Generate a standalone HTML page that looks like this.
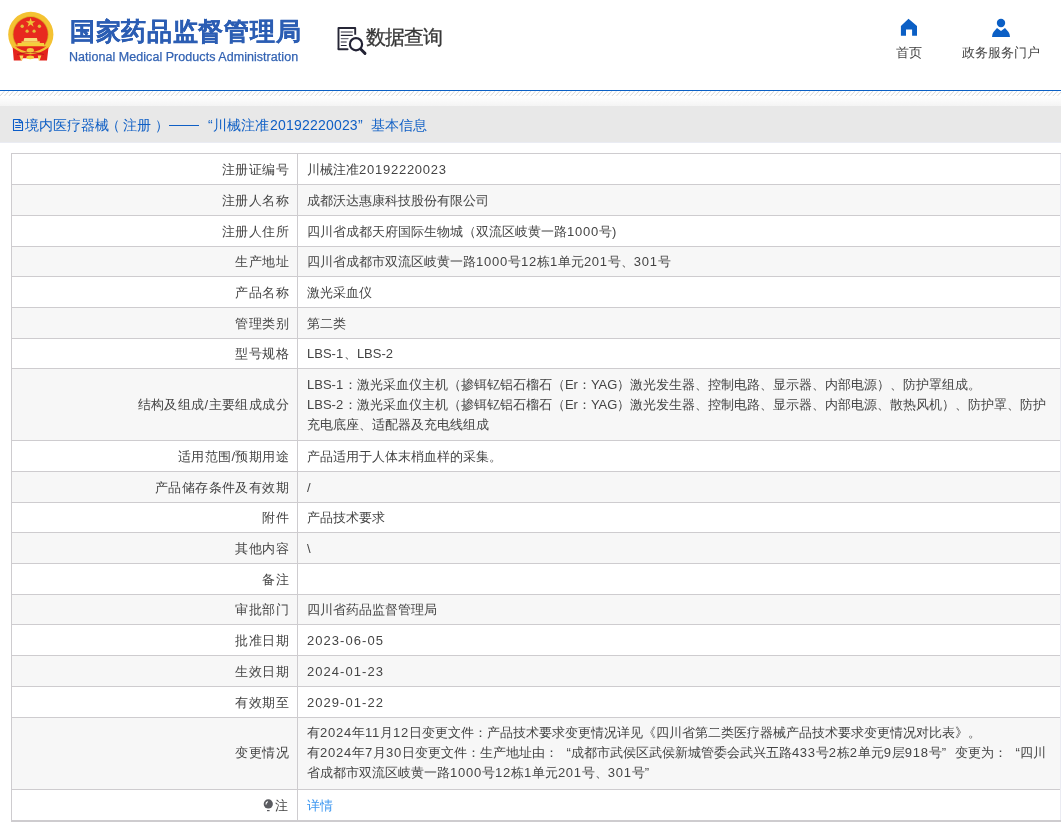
<!DOCTYPE html>
<html><head><meta charset="utf-8">
<style>
*{margin:0;padding:0;box-sizing:border-box}
html,body{width:1061px;height:826px;overflow:hidden;background:#fff;font-family:"Liberation Sans",sans-serif;color:#555}
i,b,q{font-style:normal;font-weight:normal;quotes:none}
q::before,q::after{content:none}
.abs{position:absolute}
#tbl,.abs{will-change:transform}
#title{left:70px;top:15.5px;font-size:24.5px;letter-spacing:0.7px;-webkit-text-stroke:0.25px #2b5db3;font-weight:bold;color:#2d5fb4;white-space:nowrap;line-height:32px}
#eng{left:69px;top:49px;font-size:12.5px;color:#3363b3;white-space:nowrap;line-height:16px;letter-spacing:0.05px;-webkit-text-stroke:0.25px #3363b3}
#dqt{left:366px;top:23px;-webkit-text-stroke:0.3px #383838;font-size:20px;letter-spacing:-0.9px;color:#383838;white-space:nowrap;line-height:28px}
.nav{font-size:13px;color:#444;white-space:nowrap;line-height:16px}
#bl{left:0;top:90px;width:1061px;height:1px;background:#0a5fc5}
#hatch{left:0;top:91px;width:1061px;height:5px;background:repeating-linear-gradient(135deg,#fff 0,#fff 2.5px,#e0e0e0 2.5px,#e0e0e0 3.3px,#fff 3.3px,#fff 4.65px)}
#grad{left:0;top:96px;width:1061px;height:10px;background:linear-gradient(#fff,#f4f4f4)}
#bar{left:0;top:106px;width:1061px;height:36px;background:#e8e8e8}
#barline{left:0;top:142px;width:1061px;height:1px;background:#eaecf3}
.crumb{top:116px;font-size:14px;color:#0f5fc5;white-space:nowrap;line-height:18px}
#crumb i{letter-spacing:0.25px}
#crumb q{width:14px}
#tbl{left:11px;top:153px;width:1100px}
.r{position:relative;border-top:1px solid #cecccf;border-left:1px solid #cecccf;width:1100px;font-size:13px;color:#444;line-height:20px;white-space:nowrap}
.r.g{background:#f7f7f7}
.l{position:absolute;left:0;top:0;bottom:0;width:286px;border-right:1px solid #cecccf;text-align:right;padding-right:8px;letter-spacing:0.4px}
.v{position:absolute;left:286px;top:0;bottom:0;padding-left:9px}
.v i{letter-spacing:0.75px}
q{display:inline-block;width:13px;text-align:right}
q.rq{text-align:left}
.dot{display:inline-block;width:8px;height:9px;border-radius:50%;background:#333;margin-right:2px;vertical-align:-1px}

</style></head><body>
<svg class="abs" style="left:0;top:0" width="62" height="66" viewBox="0 0 62 66">
  <circle cx="30.8" cy="34.4" r="22.6" fill="#f4c232"/>
  <circle cx="30.6" cy="34.3" r="18" fill="#dba522"/>
  <circle cx="30.6" cy="34.3" r="17.2" fill="#e8291f"/>
  <polygon points="30.6,17.8 31.8,21.2 35.4,21.2 32.5,23.3 33.6,26.7 30.6,24.6 27.6,26.7 28.7,23.3 25.8,21.2 29.4,21.2" fill="#eec338"/>
  <circle cx="22.2" cy="26.2" r="1.7" fill="#e3bd3a"/>
  <circle cx="39.4" cy="26.2" r="1.7" fill="#e3bd3a"/>
  <circle cx="27.1" cy="31.2" r="1.6" fill="#e3bd3a"/>
  <circle cx="34.1" cy="31.2" r="1.6" fill="#e3bd3a"/>
  <path d="M23.5 41.5 L24.3 38 H36.9 L37.7 41.5 Z" fill="#f8dc78"/>
  <path d="M21.5 43.2 H39.8 V41.3 H21.5 Z" fill="#f2cb4c"/>
  <path d="M17.1 46.6 L17.6 43 H44 L44.4 46.6 Z" fill="#f5cf3c"/>
  <path d="M12.6 46.6 L48.6 46.6 L47 60.5 L39.3 60.5 L38.8 58.2 L22.4 58.2 L21.8 60.5 L13.8 60.5 Z" fill="#e4241c"/>
  <path d="M12.3 45.6 Q30.6 60.5 49 45.6" fill="none" stroke="#f3c232" stroke-width="2.3"/>
  <path d="M17 54.5 Q30.6 50.5 44 54.5" fill="none" stroke="#b8141a" stroke-width="0.9"/>
  <ellipse cx="30.3" cy="50.3" rx="3.6" ry="2.2" fill="#f2c83e"/>
  <ellipse cx="30.2" cy="57.3" rx="3.9" ry="1.9" fill="#f4d040"/>
  <path d="M19.4 55.4 H23.4 L22.1 60.6 H21 Z M37.8 55.4 H41.4 L39.6 60.6 H38.6 Z" fill="#f6dc5a"/>
</svg>
<div id="title" class="abs">国家药品监督管理局</div>
<div id="eng" class="abs">National Medical Products Administration</div>
<svg class="abs" style="left:334px;top:22px" width="36" height="36" viewBox="0 0 36 36">
  <path d="M4.5 27.2 V6 H21.2 V12.8" fill="none" stroke="#262636" stroke-width="1.9" stroke-linejoin="round"/>
  <path d="M4.5 27.2 H13.6" fill="none" stroke="#262636" stroke-width="1.9" stroke-linecap="round"/>
  <path d="M7.3 10 H18.3 M7.3 16.6 H14 M7.3 20 H12.2" stroke="#6e6e7a" stroke-width="1.4" stroke-linecap="round"/>
  <path d="M7.3 13.3 H18.3 M7.3 23.5 H12.2" stroke="#262636" stroke-width="1.2" stroke-linecap="round"/>
  <circle cx="22" cy="22.2" r="6.1" fill="none" stroke="#222234" stroke-width="2.2"/>
  <path d="M26.6 27 L31 31.4" stroke="#222234" stroke-width="2.9" stroke-linecap="round"/>
</svg>
<div id="dqt" class="abs">数据查询</div>
<svg class="abs" style="left:900px;top:18px" width="18" height="18" viewBox="0 0 18 18">
  <path d="M0.9 8 L8.5 0.7 L17 8 V17.8 H12.1 V11.6 H6 V17.8 H0.9 Z" fill="#0b5fc5"/>
</svg>
<div class="abs nav" style="left:896px;top:45px">首页</div>
<svg class="abs" style="left:991px;top:18px" width="20" height="20" viewBox="0 0 20 20">
  <circle cx="10" cy="5" r="4.2" fill="#0b5fc5"/>
  <path d="M6 10 L10 13 L14 10 L17.5 14 Q19 16 19 19 H1 Q1 16 2.5 14 Z" fill="#0b5fc5"/>
</svg>
<div class="abs nav" style="left:962px;top:45px">政务服务门户</div>
<div id="bl" class="abs"></div>
<svg class="abs" style="left:0;top:91px" width="1061" height="5"><defs><pattern id="hp" patternUnits="userSpaceOnUse" width="4.5" height="5"><path d="M-0.5 5.25 L4.75 0 M4 5.25 L9.25 0 M-5 5.25 L0.25 0" stroke="#d0d0d0" stroke-width="0.9"/></pattern></defs><rect width="1061" height="5" fill="url(#hp)"/></svg>
<div id="grad" class="abs"></div>
<div id="bar" class="abs"></div>
<div id="barline" class="abs"></div>
<svg class="abs" style="left:12px;top:118px" width="12" height="14" viewBox="12 118 12 14">
  <path d="M13.5 119.5 H19.8 L22.5 122.2 V130.5 H13.5 Z" fill="none" stroke="#0b5cc8" stroke-width="1.1" stroke-linejoin="round"/>
  <path d="M19.2 119.5 V122.6 H22.5" fill="none" stroke="#0b5cc8" stroke-width="1.2"/>
  <path d="M15.2 122.5 H18 M15.2 125.5 H20.8 M15.2 127.5 H20.8" stroke="#0b5cc8" stroke-width="1"/>
</svg>
<div class="abs crumb" style="left:25px">境内医疗器械</div>
<div class="abs crumb" style="left:106px">（</div>
<div class="abs crumb" style="left:123px">注册</div>
<div class="abs crumb" style="left:155px">）</div>
<div class="abs" style="left:169px;top:125px;width:30px;height:1px;background:#0f5fc5"></div>
<div class="abs crumb" style="left:207.5px">“</div>
<div class="abs crumb" style="left:213px">川械注准</div>
<div class="abs crumb" style="left:270px;letter-spacing:0.2px">20192220023</div>
<div class="abs crumb" style="left:358px">”</div>
<div class="abs crumb" style="left:371px">基本信息</div>

<div id="tbl" class="abs">
<div class="r" style="height:31px"><div class="l" style="padding-top:6px">注册证编号</div><div class="v" style="padding-top:6px">川械注准<i>20192220023</i></div></div>
<div class="r g" style="height:31px"><div class="l" style="padding-top:6px">注册人名称</div><div class="v" style="padding-top:6px">成都沃达惠康科技股份有限公司</div></div>
<div class="r" style="height:31px"><div class="l" style="padding-top:6px">注册人住所</div><div class="v" style="padding-top:6px">四川省成都天府国际生物城（双流区岐黄一路<i>1000</i>号)</div></div>
<div class="r g" style="height:30px"><div class="l" style="padding-top:5px">生产地址</div><div class="v" style="padding-top:5px">四川省成都市双流区岐黄一路<i>1000</i>号<i>12</i>栋<i>1</i>单元<i>201</i>号、<i>301</i>号</div></div>
<div class="r" style="height:31px"><div class="l" style="padding-top:6px">产品名称</div><div class="v" style="padding-top:6px">激光采血仪</div></div>
<div class="r g" style="height:31px"><div class="l" style="padding-top:6px">管理类别</div><div class="v" style="padding-top:6px">第二类</div></div>
<div class="r" style="height:30px"><div class="l" style="padding-top:5px">型号规格</div><div class="v" style="padding-top:5px">LBS-<i>1</i>、LBS-<i>2</i></div></div>
<div class="r g" style="height:72px"><div class="l" style="padding-top:26px">结构及组成/主要组成成分</div><div class="v" style="padding-top:6px">LBS-<i>1</i>：激光采血仪主机（掺铒钇铝石榴石（Er：YAG）激光发生器、控制电路、显示器、内部电源）、防护罩组成。<br>LBS-<i>2</i>：激光采血仪主机（掺铒钇铝石榴石（Er：YAG）激光发生器、控制电路、显示器、内部电源、散热风机）、防护罩、防护<br>充电底座、适配器及充电线组成</div></div>
<div class="r" style="height:31px"><div class="l" style="padding-top:6px">适用范围/预期用途</div><div class="v" style="padding-top:6px">产品适用于人体末梢血样的采集。</div></div>
<div class="r g" style="height:31px"><div class="l" style="padding-top:6px">产品储存条件及有效期</div><div class="v" style="padding-top:6px">/</div></div>
<div class="r" style="height:30px"><div class="l" style="padding-top:5px">附件</div><div class="v" style="padding-top:5px">产品技术要求</div></div>
<div class="r g" style="height:31px"><div class="l" style="padding-top:6px">其他内容</div><div class="v" style="padding-top:6px">\</div></div>
<div class="r" style="height:31px"><div class="l" style="padding-top:6px">备注</div><div class="v" style="padding-top:6px"></div></div>
<div class="r g" style="height:30px"><div class="l" style="padding-top:5px">审批部门</div><div class="v" style="padding-top:5px">四川省药品监督管理局</div></div>
<div class="r" style="height:31px"><div class="l" style="padding-top:6px">批准日期</div><div class="v" style="padding-top:6px"><i style="letter-spacing:1.05px">2023-06-05</i></div></div>
<div class="r g" style="height:31px"><div class="l" style="padding-top:6px">生效日期</div><div class="v" style="padding-top:6px"><i style="letter-spacing:1.05px">2024-01-23</i></div></div>
<div class="r" style="height:31px"><div class="l" style="padding-top:6px">有效期至</div><div class="v" style="padding-top:6px"><i style="letter-spacing:1.05px">2029-01-22</i></div></div>
<div class="r g" style="height:72px"><div class="l" style="padding-top:25px">变更情况</div><div class="v" style="padding-top:5px">有<i>2024</i>年<i>11</i>月<i>12</i>日变更文件：产品技术要求变更情况详见《四川省第二类医疗器械产品技术要求变更情况对比表》。<br>有<i>2024</i>年<i>7</i>月<i>30</i>日变更文件：生产地址由：<q>“</q>成都市武侯区武侯新城管委会武兴五路<i>433</i>号<i>2</i>栋<i>2</i>单元<i>9</i>层<i>918</i>号<q class="rq">”</q>变更为：<q>“</q>四川<br>省成都市双流区岐黄一路<i>1000</i>号<i>12</i>栋<i>1</i>单元<i>201</i>号、<i>301</i>号<q class="rq">”</q></div></div>
<div class="r" style="height:33px;border-bottom:2px solid #cecccf"><div class="l" style="padding-top:6px;padding-right:9px">注</div><div class="v" style="color:#3d97f0;padding-top:6px">详情</div></div>
</div>
<div class="abs" style="left:1060px;top:154px;width:1px;height:666px;background:#eaebf2"></div>
<svg class="abs" style="left:262px;top:797px" width="12" height="16" viewBox="0 0 12 16">
  <circle cx="6.3" cy="6.9" r="4.6" fill="#5a5b60"/>
  <path d="M4 7.5 Q3.8 5.2 5.8 4.6" fill="none" stroke="#fff" stroke-width="1.1"/>
  <rect x="5" y="13" width="2.6" height="1.2" fill="#5a5b60"/>
</svg>
</body></html>
